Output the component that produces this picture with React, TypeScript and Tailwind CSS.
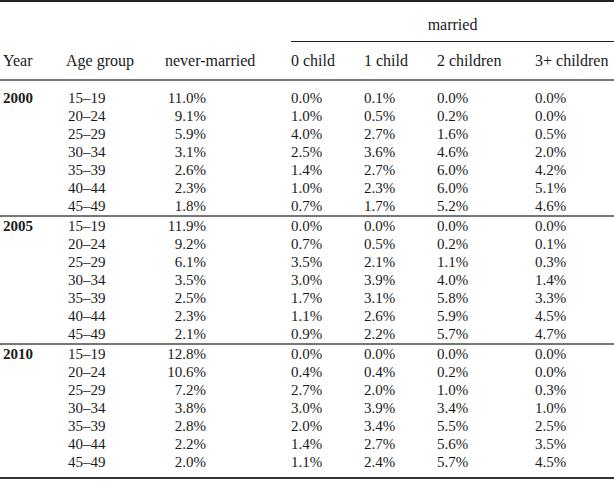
import React from "react";

type Row = [string, string, string, string, string, string];
const blocks: { year: string; rows: Row[] }[] = [
  {
    year: "2000",
    rows: [
      ["15–19", "11.0%", "0.0%", "0.1%", "0.0%", "0.0%"],
      ["20–24", "9.1%", "1.0%", "0.5%", "0.2%", "0.0%"],
      ["25–29", "5.9%", "4.0%", "2.7%", "1.6%", "0.5%"],
      ["30–34", "3.1%", "2.5%", "3.6%", "4.6%", "2.0%"],
      ["35–39", "2.6%", "1.4%", "2.7%", "6.0%", "4.2%"],
      ["40–44", "2.3%", "1.0%", "2.3%", "6.0%", "5.1%"],
      ["45–49", "1.8%", "0.7%", "1.7%", "5.2%", "4.6%"],
    ],
  },
  {
    year: "2005",
    rows: [
      ["15–19", "11.9%", "0.0%", "0.0%", "0.0%", "0.0%"],
      ["20–24", "9.2%", "0.7%", "0.5%", "0.2%", "0.1%"],
      ["25–29", "6.1%", "3.5%", "2.1%", "1.1%", "0.3%"],
      ["30–34", "3.5%", "3.0%", "3.9%", "4.0%", "1.4%"],
      ["35–39", "2.5%", "1.7%", "3.1%", "5.8%", "3.3%"],
      ["40–44", "2.3%", "1.1%", "2.6%", "5.9%", "4.5%"],
      ["45–49", "2.1%", "0.9%", "2.2%", "5.7%", "4.7%"],
    ],
  },
  {
    year: "2010",
    rows: [
      ["15–19", "12.8%", "0.0%", "0.0%", "0.0%", "0.0%"],
      ["20–24", "10.6%", "0.4%", "0.4%", "0.2%", "0.0%"],
      ["25–29", "7.2%", "2.7%", "2.0%", "1.0%", "0.3%"],
      ["30–34", "3.8%", "3.0%", "3.9%", "3.4%", "1.0%"],
      ["35–39", "2.8%", "2.0%", "3.4%", "5.5%", "2.5%"],
      ["40–44", "2.2%", "1.4%", "2.7%", "5.6%", "3.5%"],
      ["45–49", "2.0%", "1.1%", "2.4%", "5.7%", "4.5%"],
    ],
  },
];

const grid = "grid grid-cols-[63px_99px_126px_73px_73px_98px_1fr] pl-[3px]";

export default function App() {
  return (
    <div
      className="w-[614px] h-[484px] bg-white text-[#1a1a1a] overflow-hidden"
      style={{ fontFamily: '"Liberation Serif", serif' }}
    >
      <div className="h-[2px] bg-[#222]" />
      {/* married spanner */}
      <div className={`${grid} h-[40px]`}>
        <div className="col-span-3" />
        <div className="col-span-4 flex flex-col justify-end">
          <div className="text-center text-[16px] leading-[18px] mb-[7px]">married</div>
          <div className="h-px bg-[#222]" />
        </div>
      </div>
      {/* header */}
      <div className={`${grid} h-[37px] items-center text-[16px]`}>
        <div>Year</div>
        <div>Age group</div>
        <div>never-married</div>
        <div>0 child</div>
        <div>1 child</div>
        <div>2 children</div>
        <div>3+ children</div>
      </div>
      <div className="h-[2px] bg-[#777]" />
      <div className="h-[8px]" />
      {blocks.map((b, bi) => (
        <div key={b.year}>
          {bi > 0 && <div className="h-[2px] bg-[#777]" />}
          {b.rows.map((r, ri) => (
            <div key={ri} className={`${grid} h-[18px] items-center text-[15px] leading-[18px]`}>
              <div className="font-bold">{ri === 0 ? b.year : ""}</div>
              <div className="pl-[2px]">{r[0]}</div>
              <div>
                <div className="w-[41px] text-right">{r[1]}</div>
              </div>
              <div>{r[2]}</div>
              <div>{r[3]}</div>
              <div>{r[4]}</div>
              <div>{r[5]}</div>
            </div>
          ))}
        </div>
      ))}
      <div className="h-[6px]" />
      <div className="h-[2px] bg-[#333]" />
    </div>
  );
}
